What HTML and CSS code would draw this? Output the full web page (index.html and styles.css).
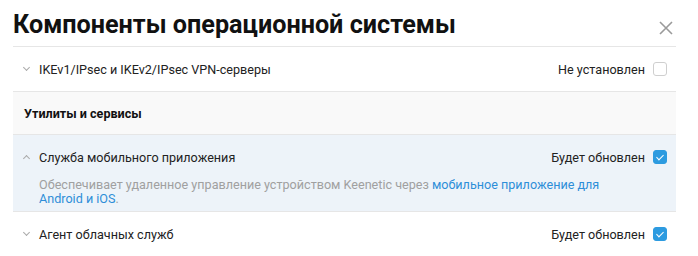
FILE: index.html
```html
<!DOCTYPE html>
<html lang="ru">
<head>
    <meta charset="UTF-8">
    <title>Компоненты операционной системы</title>
    <link rel="stylesheet" href="styles.css">
</head>
<body>
    <div class="dialog">
        <div class="dialog-header">
            <h1>Компоненты операционной системы</h1>
            <button class="close" aria-label="Закрыть">
                <svg width="14" height="14" viewBox="0 0 14 14"><path d="M1 1L13 13M13 1L1 13" stroke="#9a9a9a" stroke-width="1.6" fill="none"/></svg>
            </button>
        </div>

        <div class="component">
            <div class="component-row">
                <span class="chevron down"></span>
                <span class="component-name">IKEv1/IPsec и IKEv2/IPsec VPN-серверы</span>
                <span class="component-status">Не установлен</span>
                <span class="checkbox"></span>
            </div>
        </div>

        <div class="group-title">Утилиты и сервисы</div>

        <div class="component open">
            <div class="component-row">
                <span class="chevron up"></span>
                <span class="component-name">Служба мобильного приложения</span>
                <span class="component-status">Будет обновлен</span>
                <span class="checkbox checked"></span>
            </div>
            <p class="component-desc">Обеспечивает удаленное управление устройством Keenetic через <a href="#">мобильное приложение для Android и iOS</a>.</p>
        </div>

        <div class="component">
            <div class="component-row">
                <span class="chevron down"></span>
                <span class="component-name">Агент облачных служб</span>
                <span class="component-status">Будет обновлен</span>
                <span class="checkbox checked"></span>
            </div>
        </div>
    </div>
</body>
</html>
```

FILE: styles.css
```css
* {
    margin: 0;
    padding: 0;
    box-sizing: border-box;
}

body {
    font-family: Roboto, "Liberation Sans", sans-serif;
    background: #fff;
    color: #222;
}

.dialog {
    width: 663px;
    margin-left: 13px;
}

.dialog-header {
    display: flex;
    justify-content: space-between;
    align-items: center;
    height: 47px;
    border-bottom: 1px solid #e6e6e6;
    padding-top: 2px;
}

.dialog-header h1 {
    font-size: 25.2px;
    font-weight: 700;
    color: #111;
}

.close {
    border: none;
    background: none;
    width: 14px;
    height: 14px;
    margin: 8px 3px 0 0;
    cursor: pointer;
}

.close svg {
    display: block;
}

.component {
    border-bottom: 1px solid #e6e6e6;
}

.component.open {
    background: #edf3f9;
}

.component-row {
    display: flex;
    align-items: center;
    height: 44px;
    padding: 0 9px 0 11px;
    font-size: 12.6px;
}

.chevron {
    width: 5px;
    height: 5px;
    border-right: 1px solid #aaa;
    border-bottom: 1px solid #aaa;
    margin-right: 10px;
}

.chevron.down {
    transform: rotate(45deg);
    margin-top: -3px;
}

.chevron.up {
    transform: rotate(-135deg);
    margin-top: 3px;
}

.component-name {
    flex: 1;
}

.component-status {
    margin-right: 8px;
}

.checkbox {
    width: 14px;
    height: 14px;
    border: 1px solid #cfcfcf;
    border-radius: 3px;
    background: #fff;
    position: relative;
}

.checkbox.checked {
    background: #2d9be0;
    border-color: #2d9be0;
}

.checkbox.checked::after {
    content: "";
    position: absolute;
    left: 4px;
    top: 2px;
    width: 3px;
    height: 6px;
    border-right: 1.5px solid #fff;
    border-bottom: 1.5px solid #fff;
    transform: rotate(45deg);
}

.component-desc {
    margin-top: -1px;
    padding: 0 60px 4px 26px;
    font-size: 12.6px;
    line-height: 14px;
    color: #a0a0a0;
    min-height: 33px;
}

.component-desc a {
    color: #2d8ed8;
    text-decoration: none;
}

.group-title {
    height: 43px;
    display: flex;
    align-items: center;
    padding-left: 11px;
    background: #f9f9f9;
    border-bottom: 1px solid #e6e6e6;
    font-size: 12.6px;
    font-weight: 700;
    color: #111;
}
```
